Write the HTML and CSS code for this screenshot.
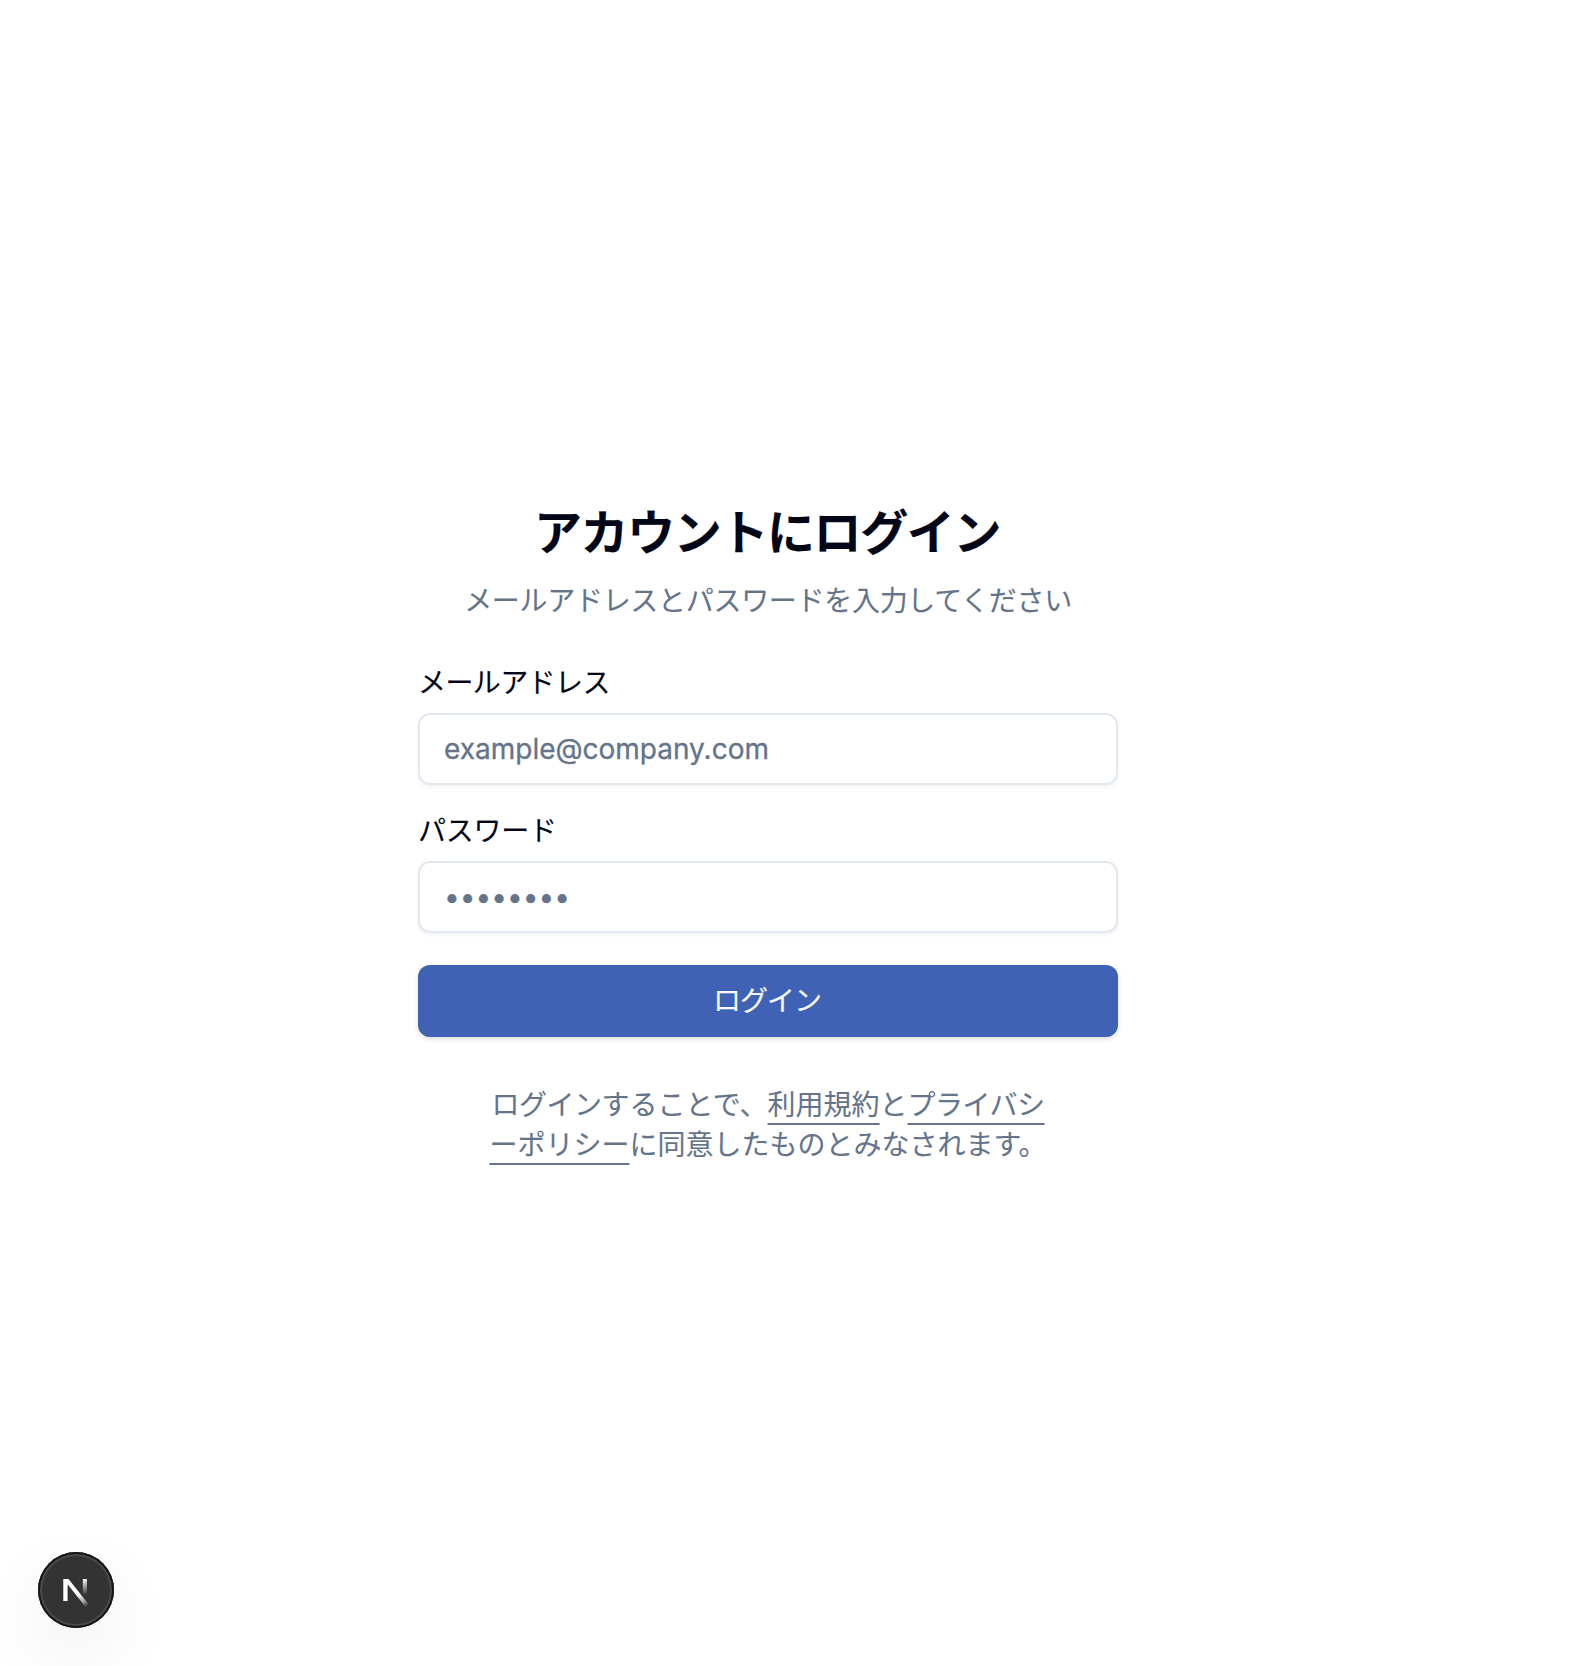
FILE: index.html
```html
<!DOCTYPE html>
<html lang="ja">
<head>
<meta charset="utf-8">
<title>ログイン</title>
<link rel="stylesheet" href="styles.css">
</head>
<body>
<main class="page">
  <div class="card">
    <header class="intro">
      <h1 class="title">アカウントにログイン</h1>
      <p class="subtitle">メールアドレスとパスワードを入力してください</p>
    </header>
    <form class="form">
      <div class="field">
        <label class="label" for="email">メールアドレス</label>
        <input class="input" id="email" type="email" placeholder="example@company.com">
      </div>
      <div class="field">
        <label class="label label-password" for="password">パスワード</label>
        <input class="input" id="password" type="password" placeholder="••••••••">
      </div>
      <button class="button" type="button">ログイン</button>
    </form>
    <p class="terms"><span class="tight">ログイン</span>することで、<a class="link" href="#">利用規約</a>と<a class="link" href="#"><span class="tight">プライバシ</span>ーポリシー</a>に同意したものとみなされます。</p>
  </div>
</main>
<div class="dev-badge">
  <svg class="dev-logo" width="76" height="76" viewBox="0 0 76 76" fill="none">
    <defs>
      <linearGradient id="diag" x1="40" y1="42" x2="50" y2="54" gradientUnits="userSpaceOnUse">
        <stop stop-color="#fff"/><stop offset="0.6" stop-color="#fff" stop-opacity="0.55"/><stop offset="1" stop-color="#fff" stop-opacity="0"/>
      </linearGradient>
      <linearGradient id="stem" x1="47" y1="27" x2="47" y2="43" gradientUnits="userSpaceOnUse">
        <stop stop-color="#fff"/><stop offset="1" stop-color="#fff" stop-opacity="0"/>
      </linearGradient>
    </defs>
    <path d="M25.3 27H30.5L51.4 53.3L48.2 55.8L29.6 32.2V49H25.3Z" fill="url(#diag)"/>
    <rect x="44.8" y="27" width="4.1" height="16" fill="url(#stem)"/>
  </svg>
</div>
</body>
</html>
```
FILE: styles.css
```css
*,
*::before,
*::after {
  box-sizing: border-box;
}

body {
  margin: 0;
  background: #fff;
  color: #020617;
  font-family: Inter, "Noto Sans CJK JP", sans-serif;
  font-size: 28px;
  line-height: 40px;
  overflow: hidden;
  -webkit-text-stroke: 0.1px currentColor;
}

.page {
  display: flex;
  align-items: center;
  justify-content: center;
  width: 1536px;
  height: 1666px;
}

.card {
  display: flex;
  flex-direction: column;
  gap: 48px;
  width: 700px;
}

.intro {
  display: flex;
  flex-direction: column;
  gap: 16px;
  text-align: center;
}

.title {
  margin: 0;
  padding-right: 2px;
  font-size: 48px;
  line-height: 64px;
  font-weight: 700;
  letter-spacing: -1.4px;
}

.subtitle {
  margin: 0;
  color: #64748b;
  letter-spacing: -0.3px;
  white-space: nowrap;
}

.form {
  display: flex;
  flex-direction: column;
  gap: 32px;
}

.field {
  display: flex;
  flex-direction: column;
  gap: 16px;
}

.label {
  line-height: 28px;
  letter-spacing: -0.6px;
}

.label-password {
  letter-spacing: -0.25px;
}

.input {
  width: 100%;
  height: 72px;
  padding: 8px 24px;
  border: 2px solid #e2e8f0;
  border-radius: 12px;
  background: transparent;
  box-shadow: 0 2px 4px rgba(0, 0, 0, 0.05);
  color: inherit;
  font: inherit;
}

.input::placeholder {
  color: #64748b;
  opacity: 1;
  -webkit-text-stroke: 0.3px #64748b;
}

.button {
  height: 72px;
  padding: 0 2px 1px 0;
  border: 0;
  border-radius: 12px;
  background: #4062b5;
  box-shadow: 0 2px 6px rgba(0, 0, 0, 0.1), 0 2px 4px -2px rgba(0, 0, 0, 0.1);
  color: #f8fafc;
  font: inherit;
  letter-spacing: -1px;
}

.terms {
  margin: 0;
  padding: 0 64px;
  color: #64748b;
  text-align: center;
  line-break: anywhere;
}

.tight {
  letter-spacing: -0.5px;
}

.link {
  color: inherit;
  text-decoration: underline;
  text-decoration-thickness: 2px;
  text-underline-offset: 8px;
}

.dev-badge {
  position: fixed;
  left: 38px;
  top: 1552px;
  width: 76px;
  height: 76px;
  border-radius: 50%;
  background: #333;
  box-shadow: inset 0 0 0 2px #171717, inset 0 0 0 4px #4a4a4a, 0 28px 72px 0 rgba(0, 0, 0, 0.07);
}

.dev-logo {
  display: block;
}
```
